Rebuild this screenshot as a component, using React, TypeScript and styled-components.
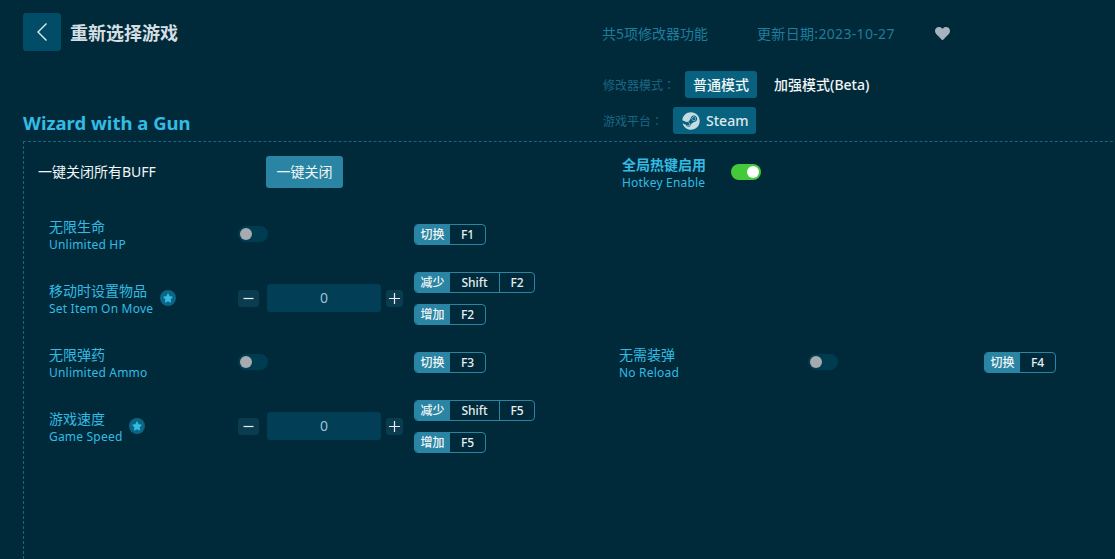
import { createGlobalStyle, styled } from 'styled-components'
import { FaHeart, FaStar, FaSteam } from 'react-icons/fa'

const GlobalStyle = createGlobalStyle`
  html, body {
    margin: 0;
    padding: 0;
    height: 100%;
    overflow: hidden;
    background: #002a3a;
    font-family: "Noto Sans", "Noto Sans CJK SC", sans-serif;
  }
  * {
    box-sizing: border-box;
  }
`

const Page = styled.div`
  width: 1115px;
  height: 559px;
  overflow: hidden;
  padding-left: 23px;
  display: flex;
  flex-direction: column;
`

const Top = styled.div`
  display: flex;
  height: 141px;
`

const TopLeft = styled.div`
  width: 579px;
  padding-top: 13px;
  display: flex;
  flex-direction: column;
  justify-content: space-between;
`

const Header = styled.div`
  display: flex;
  align-items: center;
  gap: 9px;
`

const BackButton = styled.button`
  width: 38px;
  height: 38px;
  padding: 0;
  border: 0;
  border-radius: 3px;
  background: #014d67;
  display: flex;
  align-items: center;
  justify-content: center;
`

const PageTitle = styled.h1`
  margin: 0;
  padding-top: 3px;
  font-size: 18px;
  line-height: 35px;
  font-weight: 700;
  color: #d5dfe3;
`

const GameTitle = styled.h2`
  margin: 0 0 6px;
  font-size: 18.5px;
  line-height: 24px;
  font-weight: 700;
  color: #33bbe3;
`

const TopRight = styled.div`
  display: flex;
  flex-direction: column;
  padding-top: 24px;
`

const InfoRow = styled.div`
  display: flex;
  align-items: center;
  height: 18px;
  font-size: 14px;
  color: #1f7c9c;
  margin-bottom: 29px;
`

const InfoItem = styled.span`
  width: 155px;
`

const UpdateItem = styled.span`
  width: 178px;
  letter-spacing: 0.33px;
`

const HeartIcon = styled(FaHeart)`
  width: 15px;
  height: 15px;
  color: #a5b4bc;
`

const OptionRow = styled.div`
  display: flex;
  align-items: center;
  height: 27px;
  margin-bottom: 9px;
  padding-left: 1px;
`

const OptionLabel = styled.span`
  font-size: 12px;
  color: #1a6682;
`

const Colon = styled.span`
  font-family: "Noto Sans CJK TC", sans-serif;
`

const ModeButton = styled.button<{ $active?: boolean }>`
  height: 27px;
  padding: 0 8px 2px;
  margin-left: ${(p) => (p.$active ? '10px' : '9px')};
  border: 0;
  border-radius: 3px;
  background: ${(p) => (p.$active ? '#08627f' : 'transparent')};
  color: #f2f6f7;
  font-family: inherit;
  font-size: 14px;
  font-weight: 500;
`

const SteamButton = styled.button`
  height: 27px;
  width: 83px;
  margin-left: 10px;
  padding: 0 0 0 9px;
  border: 0;
  border-radius: 3px;
  background: #08627f;
  color: #dfe9ec;
  font-family: inherit;
  font-size: 14px;
  font-weight: 500;
  display: flex;
  align-items: center;
  gap: 6px;
`

const SteamIcon = styled(FaSteam)`
  width: 18px;
  height: 18px;
  color: #c5dbe3;
`

const Panel = styled.div`
  flex: 1;
  width: 1200px;
  border: 1px dashed #1a6682;
  border-right: 0;
  border-bottom: 0;
`

const GlobalBar = styled.div`
  display: flex;
  align-items: center;
  height: 33px;
  margin-top: 13px;
  padding-left: 14px;
`

const GlobalLabel = styled.span`
  width: 228px;
  padding-bottom: 2px;
  font-size: 14px;
  color: #f2f6f7;
`

const CloseAllButton = styled.button`
  width: 77px;
  height: 32px;
  margin-top: 1px;
  padding: 0 0 2px;
  border: 0;
  border-radius: 3px;
  background: #2a84a3;
  color: #f2f6f7;
  font-family: inherit;
  font-size: 14px;
`

const HotkeyBlock = styled.div`
  margin-left: 279px;
  width: 109px;
  padding-top: 2px;
`

const Features = styled.div`
  display: grid;
  grid-template-columns: 570px 570px;
  grid-auto-rows: 64px;
  padding-left: 25px;
  margin-top: 14px;
`

const Feature = styled.div<{ $col?: number }>`
  display: flex;
  align-items: center;
  grid-column: ${(p) => p.$col ?? 1};
`

const NameBlock = styled.div`
  width: 189px;
  display: flex;
  align-items: center;
  gap: 7px;
`

const Names = styled.div`
  display: flex;
  flex-direction: column;
  padding-top: 2px;
`

const NameCn = styled.span<{ $bold?: boolean }>`
  font-size: 14px;
  line-height: 18px;
  color: #33bbe3;
  font-weight: ${(p) => (p.$bold ? 700 : 400)};
`

const NameEn = styled.span`
  font-size: 12px;
  line-height: 17px;
  letter-spacing: 0.2px;
  color: #33bbe3;
`

const StarBadge = styled.span`
  width: 16px;
  height: 16px;
  border-radius: 50%;
  background: #0b6585;
  display: flex;
  align-items: center;
  justify-content: center;
  color: #33bbe3;
`

const Control = styled.div`
  width: 176px;
  display: flex;
  align-items: center;
`

const Track = styled.span<{ $on?: boolean }>`
  width: 30px;
  height: 16px;
  border-radius: 8px;
  background: ${(p) => (p.$on ? '#43c93a' : '#003c50')};
  display: flex;
  align-items: center;
  justify-content: ${(p) => (p.$on ? 'flex-end' : 'flex-start')};
  padding: 0 2px;
  flex-shrink: 0;
`

const Knob = styled.span<{ $on?: boolean }>`
  width: 12px;
  height: 12px;
  border-radius: 50%;
  background: ${(p) => (p.$on ? '#ffffff' : '#a5acb0')};
`

const StepButton = styled.button`
  width: 21px;
  height: 17px;
  padding: 0;
  border: 0;
  border-radius: 3px;
  background: #0a3b4f;
  color: #e6eef1;
  display: flex;
  align-items: center;
  justify-content: center;
  flex-shrink: 0;
`

const PlusButton = styled(StepButton)`
  width: 17px;
`

const Value = styled.div`
  width: 114px;
  height: 28px;
  margin: 0 5px 0 8px;
  border-radius: 3px;
  background: #023f56;
  color: #9fc0cd;
  font-size: 14px;
  line-height: 28px;
  text-align: center;
`

const KeyStack = styled.div`
  display: flex;
  flex-direction: column;
  gap: 11px;
`

const KeyGroup = styled.div`
  display: flex;
  align-items: stretch;
  height: 21px;
  width: fit-content;
  border: 1px solid #2a84a3;
  border-radius: 4px;
  overflow: hidden;
`

const KeyLabel = styled.span`
  width: 35px;
  background: #2a84a3;
  color: #f2f6f7;
  font-size: 12px;
  font-weight: 500;
  line-height: 19px;
  text-align: center;
`

const KeyCap = styled.span<{ $wide?: boolean }>`
  width: ${(p) => (p.$wide ? '49px' : '35px')};
  color: #e6eef1;
  font-size: 12px;
  font-weight: 500;
  line-height: 19px;
  text-align: center;
  & + & {
    border-left: 1px solid #2a84a3;
  }
`

const Keys = ({ label, keys }: { label: string; keys: string[] }) => (
  <KeyGroup>
    <KeyLabel>{label}</KeyLabel>
    {keys.map((k) => (
      <KeyCap key={k} $wide={k === 'Shift'}>
        {k}
      </KeyCap>
    ))}
  </KeyGroup>
)

const Toggle = ({ on }: { on?: boolean }) => (
  <Track $on={on}>
    <Knob $on={on} />
  </Track>
)

const Stepper = () => (
  <>
    <StepButton>
      <svg width="11" height="11" viewBox="0 0 11 11">
        <path d="M0.5 5.5h10" stroke="currentColor" strokeWidth="1.2" />
      </svg>
    </StepButton>
    <Value>0</Value>
    <PlusButton>
      <svg width="11" height="11" viewBox="0 0 11 11">
        <path d="M0 5.5h11M5.5 0v11" stroke="currentColor" strokeWidth="1.2" />
      </svg>
    </PlusButton>
  </>
)

const Name = ({ cn, en, star }: { cn: string; en: string; star?: boolean }) => (
  <NameBlock>
    <Names>
      <NameCn>{cn}</NameCn>
      <NameEn>{en}</NameEn>
    </Names>
    {star && (
      <StarBadge>
        <FaStar size={10} />
      </StarBadge>
    )}
  </NameBlock>
)

const App: React.FC = () => {
  return (
    <Page>
      <GlobalStyle />
      <Top>
        <TopLeft>
          <Header>
            <BackButton>
              <svg width="14" height="20" viewBox="0 0 14 20" fill="none">
                <path d="M11.5 1.5 3 10l8.5 8.5" stroke="#e3ecef" strokeWidth="1.4" />
              </svg>
            </BackButton>
            <PageTitle>重新选择游戏</PageTitle>
          </Header>
          <GameTitle>Wizard with a Gun</GameTitle>
        </TopLeft>
        <TopRight>
          <InfoRow>
            <InfoItem>共5项修改器功能</InfoItem>
            <UpdateItem>更新日期:2023-10-27</UpdateItem>
            <HeartIcon />
          </InfoRow>
          <OptionRow>
            <OptionLabel>
              修改器模式<Colon>：</Colon>
            </OptionLabel>
            <ModeButton $active>普通模式</ModeButton>
            <ModeButton>加强模式(Beta)</ModeButton>
          </OptionRow>
          <OptionRow>
            <OptionLabel>
              游戏平台<Colon>：</Colon>
            </OptionLabel>
            <SteamButton>
              <SteamIcon />
              Steam
            </SteamButton>
          </OptionRow>
        </TopRight>
      </Top>
      <Panel>
        <GlobalBar>
          <GlobalLabel>一键关闭所有BUFF</GlobalLabel>
          <CloseAllButton>一键关闭</CloseAllButton>
          <HotkeyBlock>
            <Names>
              <NameCn $bold>全局热键启用</NameCn>
              <NameEn>Hotkey Enable</NameEn>
            </Names>
          </HotkeyBlock>
          <Toggle on />
        </GlobalBar>
        <Features>
          <Feature>
            <Name cn="无限生命" en="Unlimited HP" />
            <Control>
              <Toggle />
            </Control>
            <Keys label="切换" keys={['F1']} />
          </Feature>
          <Feature>
            <Name cn="移动时设置物品" en="Set Item On Move" star />
            <Control>
              <Stepper />
            </Control>
            <KeyStack>
              <Keys label="减少" keys={['Shift', 'F2']} />
              <Keys label="增加" keys={['F2']} />
            </KeyStack>
          </Feature>
          <Feature>
            <Name cn="无限弹药" en="Unlimited Ammo" />
            <Control>
              <Toggle />
            </Control>
            <Keys label="切换" keys={['F3']} />
          </Feature>
          <Feature $col={2}>
            <Name cn="无需装弹" en="No Reload" />
            <Control>
              <Toggle />
            </Control>
            <Keys label="切换" keys={['F4']} />
          </Feature>
          <Feature>
            <Name cn="游戏速度" en="Game Speed" star />
            <Control>
              <Stepper />
            </Control>
            <KeyStack>
              <Keys label="减少" keys={['Shift', 'F5']} />
              <Keys label="增加" keys={['F5']} />
            </KeyStack>
          </Feature>
        </Features>
      </Panel>
    </Page>
  )
}

export default App
